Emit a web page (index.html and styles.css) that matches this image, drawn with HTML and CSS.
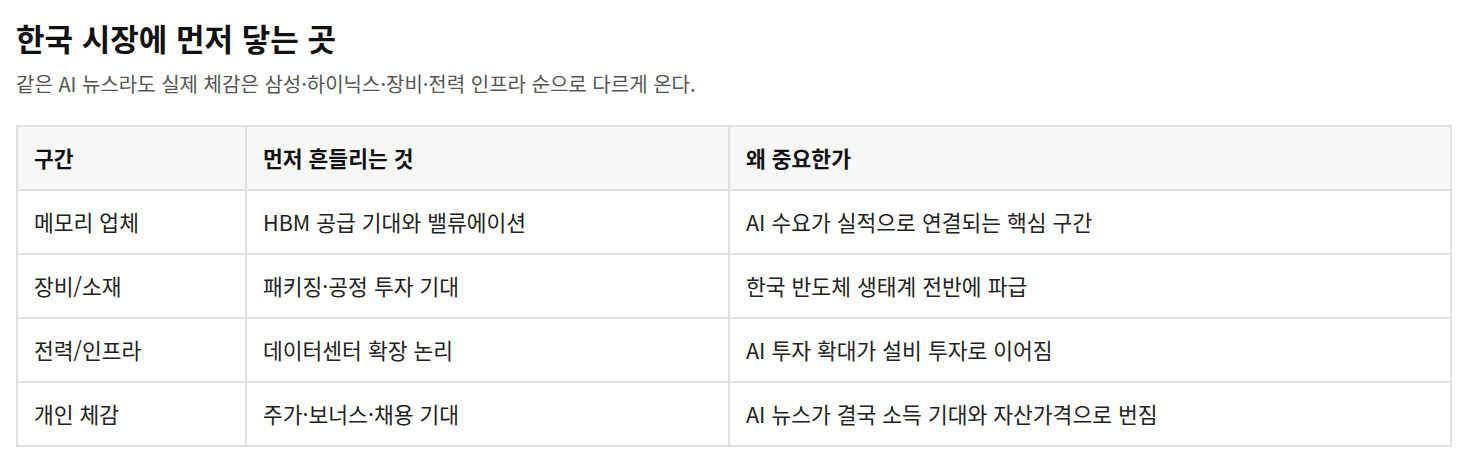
FILE: index.html
```html
<!DOCTYPE html>
<html lang="ko">
<head>
<meta charset="utf-8">
<link rel="stylesheet" href="styles.css">
</head>
<body>
<section class="block">
  <h2 class="title">한국 시장에 먼저 닿는 곳</h2>
  <p class="desc">같은 AI 뉴스라도 실제 체감은 삼성·하이닉스·장비·전력 인프라 순으로 다르게 온다.</p>
  <table class="tbl">
    <colgroup>
      <col class="c1"><col class="c2"><col class="c3">
    </colgroup>
    <thead>
      <tr><th>구간</th><th>먼저 흔들리는 것</th><th>왜 중요한가</th></tr>
    </thead>
    <tbody>
      <tr><td>메모리 업체</td><td>HBM 공급 기대와 밸류에이션</td><td>AI 수요가 실적으로 연결되는 핵심 구간</td></tr>
      <tr><td>장비/소재</td><td>패키징·공정 투자 기대</td><td>한국 반도체 생태계 전반에 파급</td></tr>
      <tr><td>전력/인프라</td><td>데이터센터 확장 논리</td><td>AI 투자 확대가 설비 투자로 이어짐</td></tr>
      <tr><td>개인 체감</td><td>주가·보너스·채용 기대</td><td>AI 뉴스가 결국 소득 기대와 자산가격으로 번짐</td></tr>
    </tbody>
  </table>
</section>
</body>
</html>
```
FILE: styles.css
```css
html, body {
  margin: 0;
  background: #ffffff;
}
body {
  padding: 16px;
  font-family: "Noto Sans CJK KR", "Noto Sans", sans-serif;
  color: #111;
}
.title {
  margin: 0;
  font-size: 31px;
  line-height: 44px;
  font-weight: 700;
  color: #111;
}
.desc {
  margin: 10px 0 0;
  font-size: 20px;
  line-height: 28px;
  color: #555;
}
.tbl {
  margin-top: 27px;
  width: 100%;
  border-collapse: collapse;
  table-layout: fixed;
  border: 2px solid #e2e2e2;
}
.c1 { width: 229px; }
.c2 { width: 483px; }
.tbl th, .tbl td {
  border: 2px solid #e2e2e2;
  padding: 16px 16px;
  text-align: left;
  font-size: 21.5px;
  line-height: 30px;
  vertical-align: middle;
}
.tbl th {
  background: #f8f8f8;
  font-weight: 700;
  color: #111;
}
.tbl td {
  color: #222;
}
```
